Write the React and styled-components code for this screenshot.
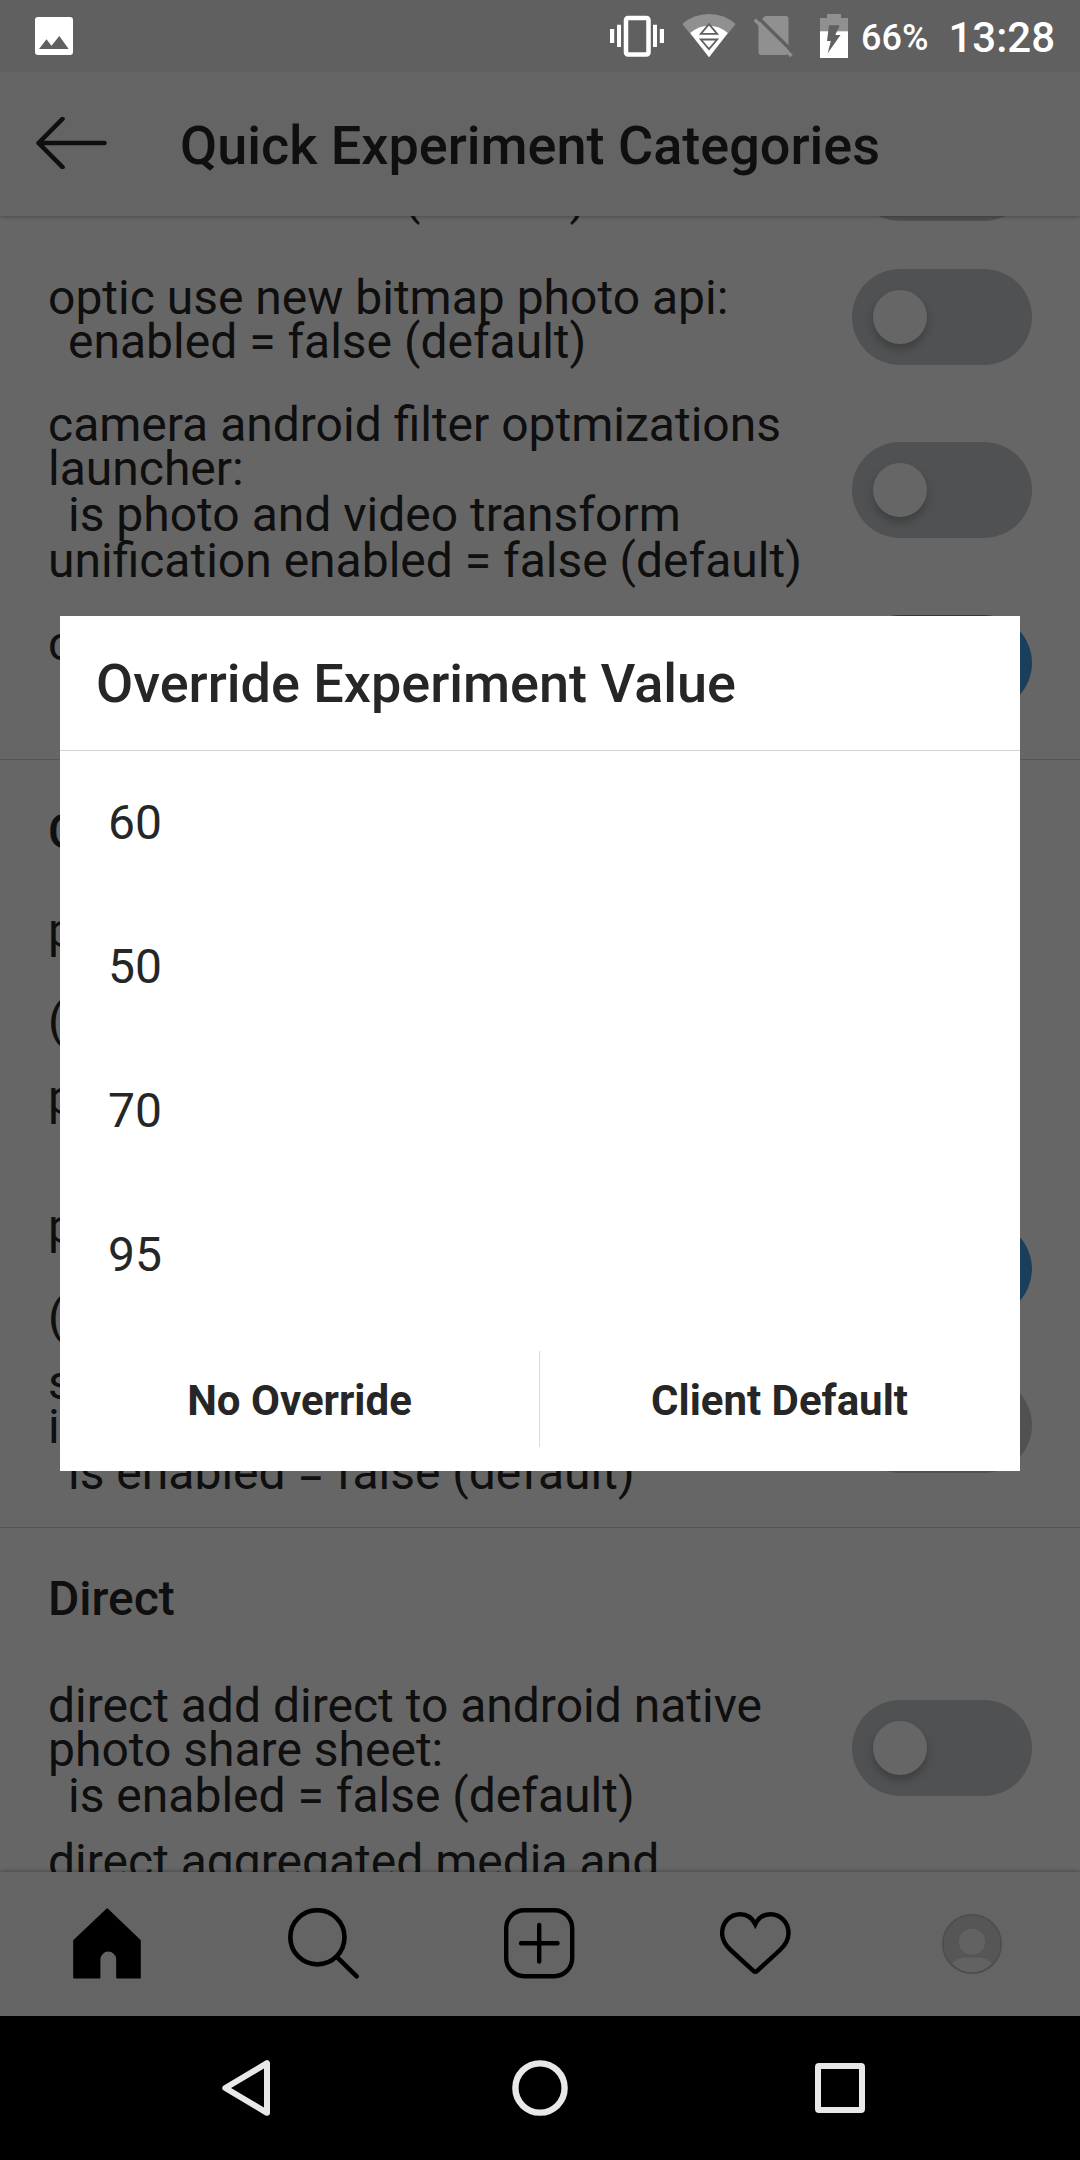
import styled, { createGlobalStyle } from 'styled-components';

const GlobalStyle = createGlobalStyle`
  * {
    box-sizing: border-box;
  }

  body {
    margin: 0;
    background: #000;
    font-family: Roboto, 'Noto Sans', sans-serif;
  }

  svg {
    display: block;
    flex-shrink: 0;
  }
`;

const Screen = styled.div`
  width: 1080px;
  height: 2160px;
  display: flex;
  flex-direction: column;
  overflow: hidden;
  background: #fff;
  color: #262626;
`;

/* ---------- status bar ---------- */

const StatusBar = styled.div`
  position: relative;
  z-index: 3;
  height: 72px;
  flex-shrink: 0;
  display: flex;
  align-items: center;
  justify-content: space-between;
  padding: 0 25px 0 35px;
  background: #606060;
  color: #fff;
`;

const StatusIcons = styled.div`
  display: flex;
  align-items: center;
`;

const StatusIcon = styled.div`
  margin-left: ${props => props.$gap || 0}px;
`;

const BatteryLevel = styled.span`
  margin-left: 13px;
  padding-top: 3px;
  font-size: 36px;
  font-weight: 500;
  line-height: 72px;
`;

const Clock = styled.span`
  margin-left: 20px;
  padding-top: 3px;
  font-size: 42px;
  font-weight: 500;
  line-height: 72px;
`;

/* ---------- header ---------- */

const Header = styled.header`
  position: relative;
  z-index: 1;
  height: 144px;
  flex-shrink: 0;
  display: flex;
  align-items: center;
  padding: 0 0 2px 36px;
  background: #fafafa;
  box-shadow: 0 1px 4px rgba(0, 0, 0, 0.28);
`;

const HeaderTitle = styled.h1`
  margin: 5px 0 0 72px;
  font-size: 54px;
  font-weight: 500;
  line-height: 64px;
`;

/* ---------- experiment list ---------- */

const List = styled.main`
  flex: 1;
  min-height: 0;
  display: flex;
  flex-direction: column;
  overflow: hidden;
`;

const Section = styled.section`
  flex-shrink: 0;
  padding-bottom: 24px;
  border-bottom: 1px solid #d4d4d4;

  /* the list is scrolled part way through the first section */
  &:first-child {
    margin-top: -115px;
  }
`;

const SectionTitle = styled.h2`
  display: flex;
  align-items: center;
  height: 142.5px;
  margin: 0;
  padding-left: 48px;
  font-size: 48px;
  font-weight: 500;
`;

const Row = styled.div`
  display: flex;
  align-items: center;
  justify-content: space-between;
  min-height: 144px;
  padding: ${props => props.$hasSwitch ? '7px 48px' : '0 48px'};
`;

const RowText = styled.div`
  padding-top: ${props => props.$hasSwitch ? '6px' : '3px'};
  font-size: 48px;
  white-space: nowrap;
`;

const Line = styled.div`
  line-height: 46px;
  text-indent: ${props => props.$indent ? '20px' : '0'};

  &:first-child {
    margin-bottom: -2px;
  }
`;

const Switch = styled.div`
  width: 180px;
  height: 96px;
  flex-shrink: 0;
  display: flex;
  align-items: center;
  justify-content: ${props => props.$on ? 'flex-end' : 'flex-start'};
  padding: 0 21px;
  border-radius: 48px;
  background: ${props => props.$on ? '#449ee4' : '#c7cacd'};
`;

const Knob = styled.div`
  width: 54px;
  height: 54px;
  border-radius: 50%;
  background: #fff;
  box-shadow: 0 5px 9px rgba(0, 0, 0, 0.24);
`;

/* ---------- tab bar ---------- */

const TabBar = styled.nav`
  position: relative;
  height: 144px;
  flex-shrink: 0;
  display: grid;
  grid-template-columns: repeat(5, 1fr);
  place-items: center;
  background: #fafafa;
  box-shadow: 0 -1px 4px rgba(0, 0, 0, 0.28);
`;

const SystemNav = styled.div`
  position: relative;
  height: 144px;
  flex-shrink: 0;
  display: flex;
  align-items: center;
  justify-content: center;
  gap: 240px;
  background: #000;
`;

/* ---------- dialog ---------- */

const Backdrop = styled.div`
  position: absolute;
  z-index: 2;
  top: 0;
  left: 0;
  width: 1080px;
  height: 2016px;
  padding-top: 71px;
  display: flex;
  align-items: center;
  justify-content: center;
  background: rgba(0, 0, 0, 0.6);
`;

const Dialog = styled.div`
  width: 960px;
  background: #fff;
`;

const DialogTitle = styled.div`
  height: 135px;
  padding: 4px 36px 0;
  border-bottom: 1px solid #d4d4d4;
  font-size: 54px;
  font-weight: 500;
  line-height: 128px;
`;

const Option = styled.div`
  height: 144px;
  padding-left: 48px;
  font-size: 48px;
  line-height: 144px;
`;

const DialogActions = styled.div`
  display: flex;
  align-items: center;
  height: 144px;
  padding-right: 1px;
`;

const Action = styled.div`
  flex: 1;
  padding-top: 3px;
  font-size: 42px;
  font-weight: 700;
  text-align: center;
`;

const ActionDivider = styled.div`
  width: 1px;
  height: 96px;
  background: #dbdbdb;
`;

/* ---------- icons ---------- */

const VIBRATE = (
  <svg width="54" height="42" viewBox="611 15 54 42" fill="#fff">
    <rect x="627" y="18" width="22.5" height="36.5" rx="2" fill="none" stroke="#fff" strokeWidth="4.5" />
    <path d="M618 24.7h4v22.3h-4zM611 29h4.2v14H611zM654 24.7h4v22.3h-4zM660.8 29h4.2v14h-4.2z" />
  </svg>
);

const WIFI = (
  <svg width="54" height="44" viewBox="682.4 14 54 44">
    <path d="M709.4 57.2L682.7 24Q694 14 709.4 14T736 24z" fill="#909090" />
    <path d="M709.4 57.2L690.6 33Q699 25.7 709.4 25.7T728.2 33z" fill="#fff" />
    <path d="M709.4 24.2L701.2 33.9h16.4zM709.4 49.200L701.200 39.500h16.400z" fill="#fff" stroke="#606060" strokeWidth="1.8" />
  </svg>
);

const NO_SIM = (
  <svg width="40" height="44" viewBox="755 14 40 44">
    <path d="M766 16h20.5a3 3 0 0 1 3 3v33a3 3 0 0 1-3 3H762.5a3 3 0 0 1-3-3V22.500z" fill="#909090" />
    <path d="M758 16.5L795 53" stroke="#606060" strokeWidth="3.5" />
    <path d="M755.8 19.7L792.5 56" stroke="#909090" strokeWidth="3.5" />
  </svg>
);

const BATTERY = (
  <svg width="28" height="44" viewBox="821 14 28 44">
    <path d="M828 14h14v4h7v14h-28V18h7z" fill="#909090" />
    <path d="M821 31.3h28V58h-28z" fill="#fff" />
    <path d="M830 25.3h10.700L836.3 35h5.200L828.7 53.3 831.8 41H828z" fill="#606060" />
  </svg>
);

const IMAGE = (
  <svg width="38" height="38" viewBox="0 0 38 38">
    <rect width="38" height="38" rx="3" fill="#fff" />
    <path d="M4 32l7.5-9.700 5 6.500L24.3 19 33.7 32z" fill="#606060" />
  </svg>
);

const BACK = (
  <svg width="72" height="52" viewBox="0 0 72 52" fill="none" stroke="#262626" strokeWidth="4.6" strokeLinecap="round" strokeLinejoin="round">
    <path d="M26.5 1.800L2.600 26l23.900 24.200M2.600 26H68.500" />
  </svg>
);

const HOME = (
  <svg width="72" height="72" viewBox="0 0 72 72">
    <path
      d="M35.2 1L68 32.5V69.7H45V51.5a8.7 8.7 0 0 0-17.4 0V69.7H2V32.5z"
      stroke="#000"
      strokeWidth="1.6"
      strokeLinejoin="round"
    />
  </svg>
);

const SEARCH = (
  <svg width="72" height="72" viewBox="0 0 72 72" fill="none" stroke="#000" strokeWidth="4.6" strokeLinecap="round">
    <circle cx="29.4" cy="29.3" r="27.1" />
    <path d="M49.3 49.3L68.7 68.3" />
  </svg>
);

const ADD = (
  <svg width="72" height="72" viewBox="0 0 72 72" fill="none" stroke="#000" strokeWidth="4.4" strokeLinecap="round">
    <rect x="2.2" y="2.2" width="66" height="66" rx="18" />
    <path d="M17 35.2h36.5M35.2 17v36.5" />
  </svg>
);

const HEART = (
  <svg width="72" height="72" viewBox="0 0 72 72" fill="none" stroke="#000" strokeWidth="4.4">
    <path d="M35.3 16.2C38.5 9.5 44 6.2 50.5 6.2C60.5 6.2 68.5 14.3 68.5 25.3C68.5 33 64.8 37.5 60 42L37.2 62.8Q35.3 64.5 33.4 62.8L10.6 42C5.8 37.5 2.1 33 2.1 25.3C2.1 14.3 10.1 6.2 20.1 6.2C26.6 6.2 32.1 9.5 35.3 16.2z" />
  </svg>
);

const PROFILE = (
  <svg width="60" height="60" viewBox="0 0 60 60">
    <circle cx="30" cy="30" r="29.2" fill="#d6d6d6" stroke="#c0c0c0" strokeWidth="1.6" />
    <circle cx="30" cy="27.7" r="13" fill="#f6f6f6" />
    <path d="M10.5 49.5Q15 44 22 43.7H38Q45 44 49.5 49.5Q41 58.3 30 58.3T10.5 49.5z" fill="#f6f6f6" />
  </svg>
);

const TABS = [
  ['home', HOME],
  ['search', SEARCH],
  ['add', ADD],
  ['activity', HEART],
  ['profile', PROFILE],
];

const SECTIONS = [
  {
    rows: [
      { type: 'off', lines: ['optic use new camera api:', ' enabled = false (default)'] },
      { type: 'off', lines: ['optic use new bitmap photo api:', ' enabled = false (default)'] },
      {
        type: 'off',
        lines: [
          'camera android filter optmizations',
          'launcher:',
          ' is photo and video transform',
          'unification enabled = false (default)',
        ],
      },
      { type: 'on', lines: ['camera launcher:', ' enabled = true'] },
    ],
  },
  {
    title: 'Creation',
    rows: [
      { type: 'value', lines: ['photo quality:', ' jpeg quality = 95', '(default)'] },
      { type: 'value', lines: ['photo size:', ' width = 1080'] },
      { type: 'on', lines: ['photo upload:', ' is enabled = true', '(default)'] },
      { type: 'off', lines: ['share', 'improvements:', ' is enabled = false (default)'] },
    ],
  },
  {
    title: 'Direct',
    rows: [
      {
        type: 'off',
        lines: ['direct add direct to android native', 'photo share sheet:', ' is enabled = false (default)'],
      },
      { type: 'off', lines: ['direct aggregated media and', 'links:', ' is enabled = false', '(default)'] },
    ],
  },
];

const ExperimentRow = ({ type, lines }) => {
  const hasSwitch = type !== 'value';

  return (
    <Row $hasSwitch={hasSwitch}>
      <RowText $hasSwitch={hasSwitch}>
        {lines.map(line => (
          <Line key={line} $indent={line.startsWith(' ')}>{line.trim()}</Line>
        ))}
      </RowText>
      {hasSwitch && (
        <Switch $on={type === 'on'}>
          <Knob />
        </Switch>
      )}
    </Row>
  );
};

const OverrideDialog = ({ options }) => (
  <Backdrop>
    <Dialog>
      <DialogTitle>Override Experiment Value</DialogTitle>
      {options.map(value => <Option key={value}>{value}</Option>)}
      <DialogActions>
        <Action>No Override</Action>
        <ActionDivider />
        <Action>Client Default</Action>
      </DialogActions>
    </Dialog>
  </Backdrop>
);

const App = () => (
  <>
    <GlobalStyle />
    <Screen>
      <StatusBar>
        {IMAGE}
        <StatusIcons>
          <StatusIcon>{VIBRATE}</StatusIcon>
          <StatusIcon $gap={18}>{WIFI}</StatusIcon>
          <StatusIcon $gap={18}>{NO_SIM}</StatusIcon>
          <StatusIcon $gap={26}>{BATTERY}</StatusIcon>
          <BatteryLevel>66%</BatteryLevel>
          <Clock>13:28</Clock>
        </StatusIcons>
      </StatusBar>

      <Header>
        {BACK}
        <HeaderTitle>Quick Experiment Categories</HeaderTitle>
      </Header>

      <List>
        {SECTIONS.map((section, i) => (
          <Section key={i}>
            {section.title && <SectionTitle>{section.title}</SectionTitle>}
            {section.rows.map(row => <ExperimentRow key={row.lines[0]} {...row} />)}
          </Section>
        ))}
      </List>

      <TabBar>
        {TABS.map(([name, icon]) => <div key={name}>{icon}</div>)}
      </TabBar>

      <SystemNav>
        <svg width="60" height="60" viewBox="0 0 60 60" fill="none" stroke="#e8e8e8" strokeWidth="6" strokeLinejoin="round">
          <path d="M57 5.2V54.8L15.3 30z" />
        </svg>
        <svg width="60" height="60" viewBox="0 0 60 60" fill="none" stroke="#e8e8e8" strokeWidth="6.4">
          <circle cx="30" cy="30" r="24.6" />
        </svg>
        <svg width="60" height="60" viewBox="0 0 60 60" fill="none" stroke="#e8e8e8" strokeWidth="6" strokeLinejoin="round">
          <rect x="8" y="8" width="44" height="44" rx="1" />
        </svg>
      </SystemNav>

      <OverrideDialog options={[60, 50, 70, 95]} />
    </Screen>
  </>
);

export default App;
